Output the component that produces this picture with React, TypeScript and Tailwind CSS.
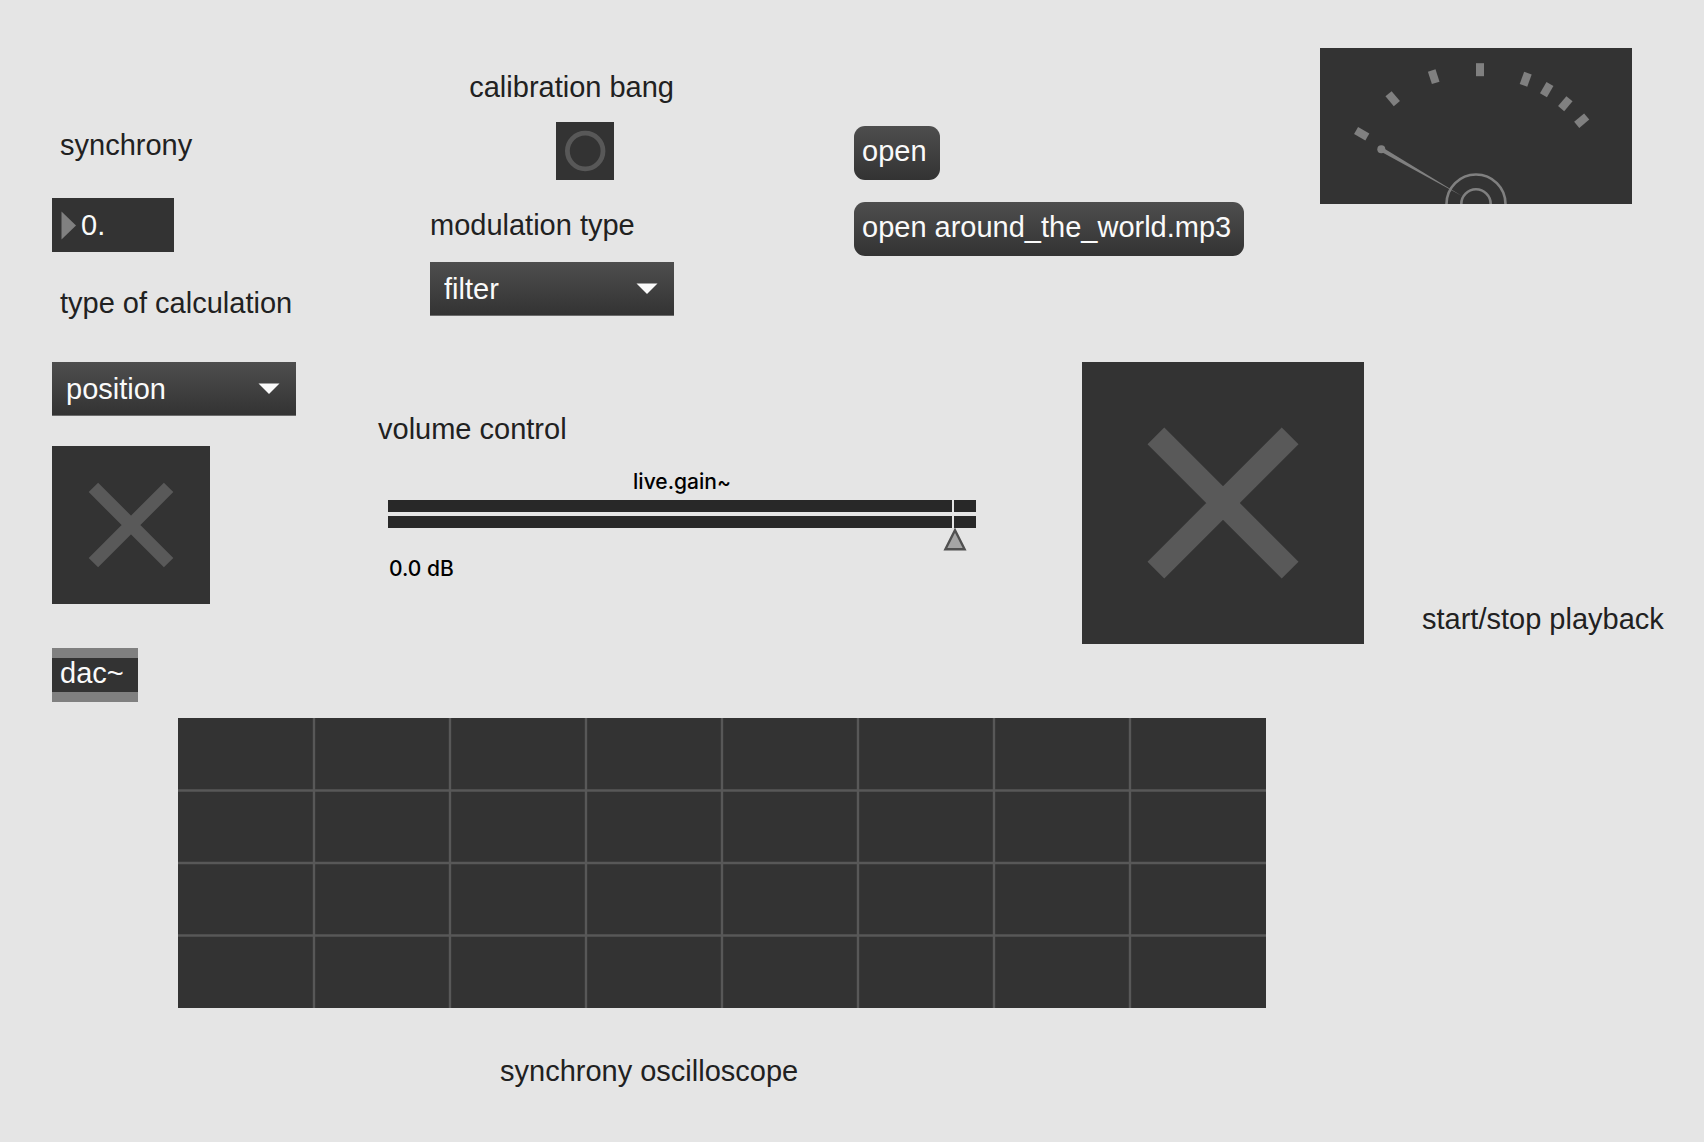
import { useId, useState } from "react";

const LABEL = "block whitespace-nowrap text-[29px] leading-8 text-[#212121]";

function Menu({ id, value, options }: { id: string; value: string; options: string[] }) {
  return (
    <div className="relative w-[244px]">
      <select
        id={id}
        defaultValue={value}
        className="block h-[54px] w-full appearance-none rounded-none border-b border-[#6b6b6b] bg-linear-to-b from-[#4e4e4e] to-[#333333] pl-[14px] pr-12 pt-px text-[29px] leading-8 text-[#fafafa]"
      >
        {options.map((o) => (
          <option key={o}>{o}</option>
        ))}
      </select>
      <svg className="pointer-events-none absolute right-4 top-[21px] h-[11px] w-[22px]" viewBox="0 0 22 11" aria-hidden="true">
        <path d="M0.5 0.5H21.5L11 11Z" fill="#fafafa" />
      </svg>
    </div>
  );
}

function Toggle({ id, name, size }: { id: string; name?: string; size: string }) {
  return (
    <div className={`relative shrink-0 ${size}`}>
      <input id={id} type="checkbox" aria-label={name} className="peer block h-full w-full appearance-none bg-[#333333]" />
      <svg
        className="pointer-events-none absolute inset-0 h-full w-full text-[#595959] peer-checked:text-[#cee5e8]"
        viewBox="0 0 158 158"
        aria-hidden="true"
      >
        <path d="M41.4 41.4L116.6 116.6M116.6 41.4L41.4 116.6" stroke="currentColor" strokeWidth="13.3" fill="none" />
      </svg>
    </div>
  );
}

function Message({ children }: { children: string }) {
  return (
    <button
      type="button"
      className="h-[54px] whitespace-nowrap rounded-[11px] bg-linear-to-b from-[#4e4e4e] to-[#333333] pb-1 pl-2 pr-[13px] text-[29px] leading-8 text-[#fafafa]"
    >
      {children}
    </button>
  );
}

const TICKS = [
  [41.7, 85.7, -60],
  [72.7, 50.7, -40],
  [113.7, 28.7, -18],
  [160, 21.7, 0],
  [205.7, 31.2, 20],
  [226.7, 41.7, 30],
  [245.3, 55.7, 40],
  [261.7, 72.7, 50],
];

function Meter() {
  return (
    <svg className="ml-auto mr-[72px] mt-12 h-[156px] w-[312px] shrink-0 bg-[#333333]" viewBox="0 0 312 156" role="img" aria-label="level meter">
      {TICKS.map(([x, y, a]) => (
        <rect key={x} x={x - 4} y={y - 6.5} width="8" height="13" fill="#808080" transform={`rotate(${a} ${x} ${y})`} />
      ))}
      <circle cx="156" cy="156" r="29.5" fill="none" stroke="#808080" strokeWidth="2.6" />
      <circle cx="156" cy="156" r="14.7" fill="none" stroke="#808080" strokeWidth="2.6" />
      <path d="M60.2 103.2L62.4 99.4L142 147.9Z" fill="#808080" />
      <circle cx="61.3" cy="101.3" r="4" fill="#808080" />
    </svg>
  );
}

function Gain({ id }: { id: string }) {
  const [level, setLevel] = useState(964);
  const db = ((level - 964) / 6).toFixed(1);
  return (
    <div className="ml-[10px] mt-[23px] font-['Inter',sans-serif] text-[21px] font-medium leading-7 text-black">
      <div className="text-center">live.gain~</div>
      <div className="relative mt-1 h-[51px]">
        <div className="h-3 bg-[#282828]" />
        <div className="mt-1 h-3 bg-[#282828]" />
        <div
          className="absolute top-0 -ml-3 flex w-6 flex-col items-center"
          style={{ left: `${level / 10}%` }}
          aria-hidden="true"
        >
          <div className="mr-1 h-7 w-[2px] bg-[#e5e5e5]" />
          <svg className="h-6 w-6" viewBox="0 0 24 24">
            <path d="M12 2.2L21.6 21.3H2.4Z" fill="#a5a5a5" stroke="#505050" strokeWidth="2.4" />
          </svg>
        </div>
        <input
          id={id}
          type="range"
          min={0}
          max={1000}
          value={level}
          onChange={(e) => setLevel(Number(e.target.value))}
          className="absolute inset-0 h-full w-full opacity-0"
        />
      </div>
      <div className="mt-1 pl-px">{db} dB</div>
    </div>
  );
}

function Scope() {
  return (
    <svg className="block h-[290px] w-full bg-[#333333]" role="img" aria-label="synchrony oscilloscope">
      <g stroke="#585858" strokeWidth="2.4">
        {["25%", "50%", "75%"].map((y) => (
          <line key={y} x1="0" x2="100%" y1={y} y2={y} />
        ))}
        {["12.5%", "25%", "37.5%", "50%", "62.5%", "75%", "87.5%"].map((x) => (
          <line key={x} x1={x} x2={x} y1="0" y2="100%" />
        ))}
      </g>
    </svg>
  );
}

export default function App() {
  const id = useId();
  return (
    <main className="min-h-screen bg-[#e5e5e5] pb-12 font-['Liberation_Sans',Arial,sans-serif]">
      <div className="flex pl-[52px]">
        <section className="flex w-[244px] shrink-0 flex-col items-start pt-[129px]">
          <label htmlFor={id + "sync"} className={`${LABEL} pl-2`}>
            synchrony
          </label>
          <div className="mt-[37px] flex h-[54px] w-[122px] items-center bg-[#333333] pl-[9px]">
            <svg className="h-[29px] w-[15px] shrink-0" viewBox="0 0 15 29" aria-hidden="true">
              <path d="M0.5 0.5L15 14.5L0.5 28.5Z" fill="#808080" />
            </svg>
            <input
              id={id + "sync"}
              defaultValue="0."
              className="ml-[5px] w-full min-w-0 bg-transparent text-[29px] leading-8 text-[#fafafa] outline-none"
            />
          </div>
          <label htmlFor={id + "calc"} className={`${LABEL} mt-[35px] pl-2`}>
            type of calculation
          </label>
          <div className="mt-[43px]">
            <Menu id={id + "calc"} value="position" options={["position", "velocity"]} />
          </div>
          <div className="mt-[30px]">
            <Toggle id={id + "on"} name="audio on" size="h-[158px] w-[158px]" />
          </div>
          <div className="mt-11 flex h-[54px] w-[86px] items-center border-y-[10px] border-[#808080] bg-[#333333] pb-1 pl-2 text-[29px] leading-8 text-[#fafafa]">
            dac~
          </div>
        </section>

        <div className="min-w-0 flex-1">
          <div className="flex items-start">
            <section className="ml-[134px] w-[244px] shrink-0 pt-[71px]">
              <label htmlFor={id + "bang"} className={`${LABEL} text-right`}>
                calibration bang
              </label>
              <button id={id + "bang"} type="button" className="ml-[126px] mt-[19px] block h-[58px] w-[58px] bg-[#333333]">
                <svg className="h-[58px] w-[58px]" viewBox="0 0 58 58" aria-hidden="true">
                  <circle cx="29.2" cy="29" r="17.8" fill="none" stroke="#585858" strokeWidth="4.8" />
                </svg>
              </button>
              <label htmlFor={id + "mod"} className={`${LABEL} mb-[21px] mt-[29px]`}>
                modulation type
              </label>
              <Menu id={id + "mod"} value="filter" options={["filter", "volume"]} />
            </section>
            <section className="ml-[180px] flex flex-col items-start gap-[22px] pt-[126px]">
              <Message>open</Message>
              <Message>open around_the_world.mp3</Message>
            </section>
            <Meter />
          </div>

          <div className="flex items-start pt-[46px]">
            <section className="ml-[82px] mr-[106px] mt-[51px] flex-1">
              <label htmlFor={id + "gain"} className={LABEL}>
                volume control
              </label>
              <Gain id={id + "gain"} />
            </section>
            <Toggle id={id + "play"} size="h-[282px] w-[282px]" />
            <label htmlFor={id + "play"} className={`${LABEL} ml-[58px] mr-[38px] mt-[241px] w-[244px] shrink-0`}>
              start/stop playback
            </label>
          </div>
        </div>
      </div>

      <figure className="ml-[178px] mr-[438px] mt-4">
        <Scope />
        <figcaption className={`${LABEL} ml-[322px] mt-[47px]`}>synchrony oscilloscope</figcaption>
      </figure>
    </main>
  );
}
